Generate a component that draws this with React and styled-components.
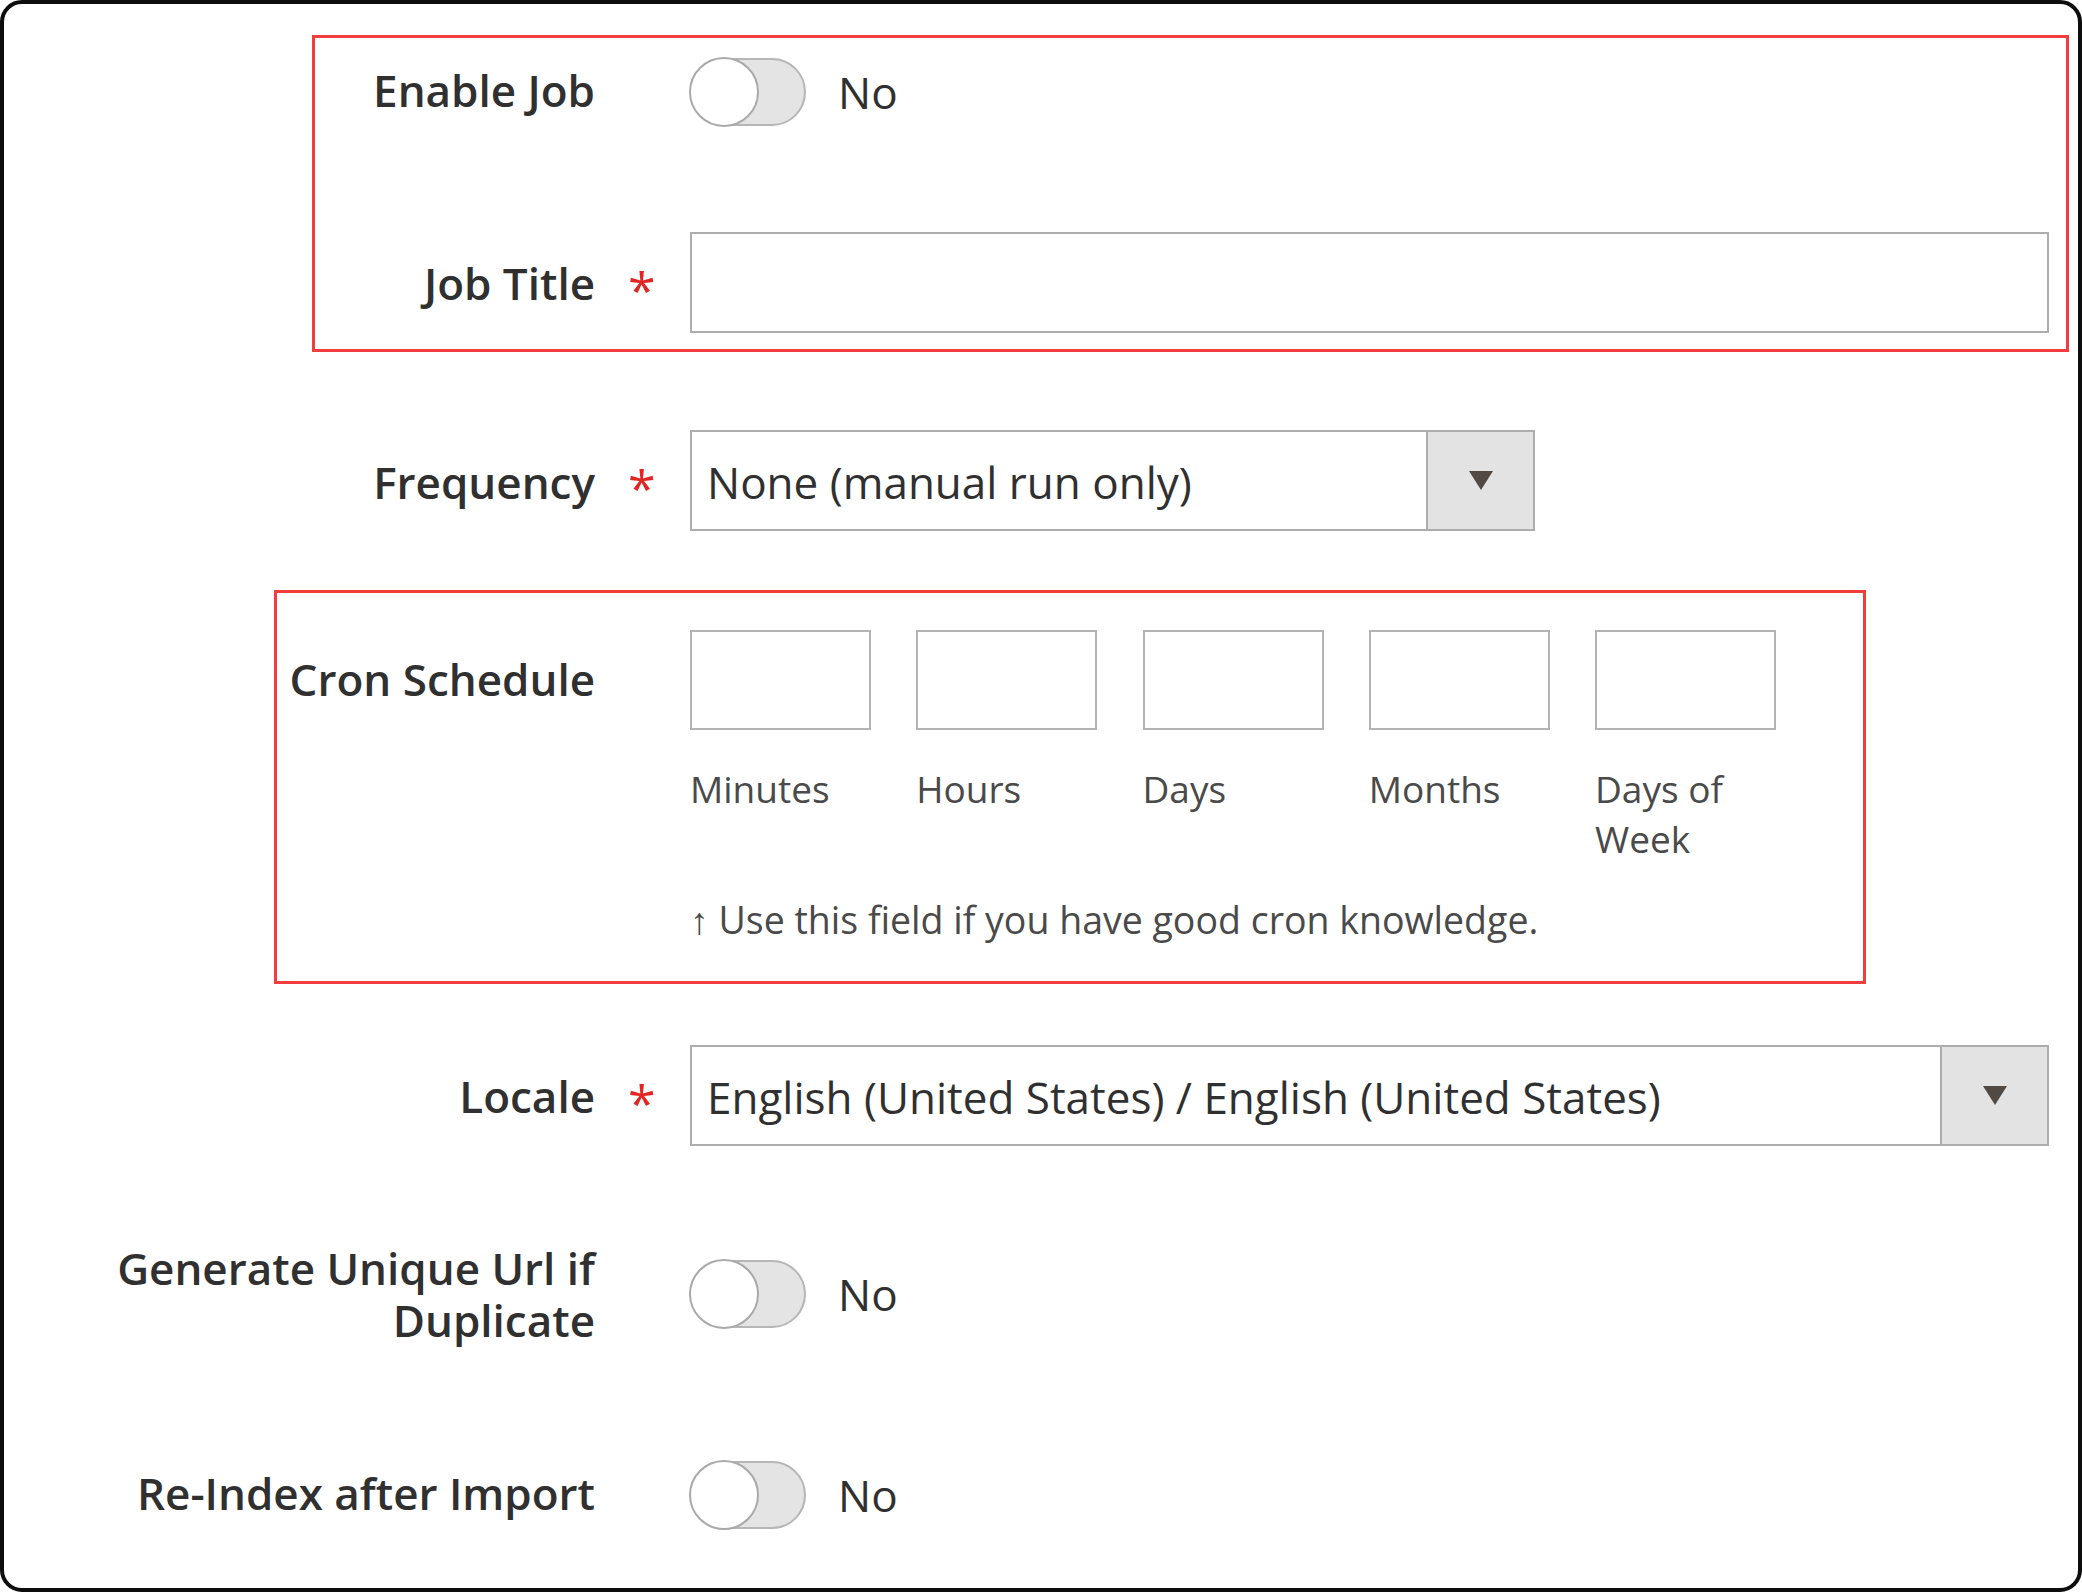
import React from 'react';
import styled, { createGlobalStyle } from 'styled-components';

const GlobalStyle = createGlobalStyle`
  html, body { margin: 0; padding: 0; background: #fff; overflow: hidden; }
  *, *::before, *::after { box-sizing: border-box; }
  body { font-family: "Open Sans", "Noto Sans", "Liberation Sans", sans-serif; color: #303030; }
`;

const Frame = styled.div`
  width: 2082px;
  height: 1592px;
  border: 4px solid #0d0d0d;
  border-radius: 22px;
  background: #fff;
  overflow: hidden;
`;

const Form = styled.div`
  display: flex;
  flex-direction: column;
  padding-top: 31px;
`;

const Highlight = styled.div`
  --shift: ${(p) => p.$left + 3}px;
  display: flex;
  flex-direction: column;
  margin-left: ${(p) => p.$left}px;
  margin-top: ${(p) => p.$mt || 0}px;
  width: ${(p) => p.$width}px;
  border: 3px solid #f13d3d;
  padding: ${(p) => p.$pt}px 0 ${(p) => p.$pb}px;
`;

const Row = styled.div`
  display: flex;
  align-items: ${(p) => p.$align || 'center'};
  margin-top: ${(p) => p.$mt || 0}px;
`;

const Label = styled.label`
  flex: 0 0 auto;
  width: calc(591px - var(--shift, 0px));
  padding-top: ${(p) => p.$pt || 0}px;
  padding-bottom: ${(p) => p.$pb || 0}px;
  text-align: right;
  font-size: 44px;
  font-weight: 600;
  line-height: 52px;
  color: #303030;
`;

const Required = styled.span`
  flex: 0 0 95px;
  align-self: center;
  height: 66px;
  padding: 14px 0 0 33px;
  font-size: 50px;
  line-height: 52px;
  color: #e22626;
`;

const SwitchWrap = styled.div`
  display: flex;
  align-items: center;
`;

const Track = styled.span`
  display: inline-flex;
  align-items: center;
  width: 116px;
  height: 68px;
  border-radius: 34px;
  background: #e4e4e4;
  border: 2px solid #b6b6b6;
`;

const Knob = styled.span`
  flex: 0 0 auto;
  width: 70px;
  height: 70px;
  margin-left: -3px;
  border-radius: 50%;
  background: #fff;
  border: 2px solid #a9a9a9;
`;

const SwitchText = styled.span`
  margin-left: 32px;
  font-size: 44px;
  line-height: 52px;
  color: #303030;
`;

const TextInput = styled.input`
  width: ${(p) => p.$w}px;
  height: 101px;
  border: 2px solid #adadad;
  border-radius: 0;
  background: #fff;
  outline: none;
  padding: 0 15px;
  font: inherit;
`;

const Select = styled.div`
  display: flex;
  width: ${(p) => p.$w}px;
  height: 101px;
  border: 2px solid #adadad;
  background: #fff;
`;

const SelectValue = styled.span`
  flex: 1 1 auto;
  display: flex;
  align-items: center;
  padding: 3px 0 0 15px;
  font-size: 44px;
  line-height: 52px;
  color: #303030;
  white-space: nowrap;
`;

const SelectArrow = styled.span`
  flex: 0 0 107px;
  display: flex;
  align-items: center;
  justify-content: center;
  border-left: 2px solid #adadad;
  background: #e3e3e3;
`;

const Triangle = styled.span`
  width: 0;
  height: 0;
  border-left: 12.5px solid transparent;
  border-right: 12.5px solid transparent;
  border-top: 19px solid #514943;
`;

const CronControl = styled.div`
  display: flex;
  flex-direction: column;
`;

const CronGrid = styled.div`
  display: grid;
  grid-template-columns: repeat(5, 181px);
  column-gap: 45.25px;
`;

const CronCell = styled.div`
  display: flex;
  flex-direction: column;
`;

const CronInput = styled.input`
  width: 100%;
  height: 100px;
  border: 2px solid #b3b3b3;
  border-radius: 0;
  background: #fff;
  outline: none;
  font: inherit;
`;

const CronCaption = styled.span`
  margin-top: 34px;
  font-size: 37px;
  line-height: 50px;
  color: #4a4a4a;
`;

const Hint = styled.p`
  margin: 31px 0 0;
  font-size: 37.5px;
  line-height: 50px;
  color: #4a4a4a;
  white-space: nowrap;
`;

const Toggle = ({ text = 'No' }) => (
  <SwitchWrap>
    <Track>
      <Knob />
    </Track>
    <SwitchText>{text}</SwitchText>
  </SwitchWrap>
);

const Dropdown = ({ value, width }) => (
  <Select $w={width}>
    <SelectValue>{value}</SelectValue>
    <SelectArrow>
      <Triangle />
    </SelectArrow>
  </Select>
);

const cronParts = ['Minutes', 'Hours', 'Days', 'Months', 'Days of Week'];

export default function App() {
  return (
    <>
      <GlobalStyle />
      <Frame>
        <Form>
          <Highlight $left={308} $width={1757} $pt={20} $pb={16}>
            <Row>
              <Label $pb={5}>Enable Job</Label>
              <Required />
              <Toggle />
            </Row>
            <Row $mt={106}>
              <Label>Job Title</Label>
              <Required>*</Required>
              <TextInput $w={1359} />
            </Row>
          </Highlight>

          <Row $mt={78}>
            <Label $pt={3}>Frequency</Label>
            <Required>*</Required>
            <Dropdown value="None (manual run only)" width={845} />
          </Row>

          <Highlight $left={270} $width={1592} $mt={59} $pt={37} $pb={36}>
            <Row $align="flex-start">
              <Label $pt={23}>Cron Schedule</Label>
              <Required />
              <CronControl>
                <CronGrid>
                  {cronParts.map((part) => (
                    <CronCell key={part}>
                      <CronInput />
                      <CronCaption>{part}</CronCaption>
                    </CronCell>
                  ))}
                </CronGrid>
                <Hint>↑ Use this field if you have good cron knowledge.</Hint>
              </CronControl>
            </Row>
          </Highlight>

          <Row $mt={61}>
            <Label>Locale</Label>
            <Required>*</Required>
            <Dropdown value="English (United States) / English (United States)" width={1359} />
          </Row>

          <Row $mt={96}>
            <Label>Generate Unique Url if Duplicate</Label>
            <Required />
            <Toggle />
          </Row>

          <Row $mt={115}>
            <Label $pb={5}>Re-Index after Import</Label>
            <Required />
            <Toggle />
          </Row>
        </Form>
      </Frame>
    </>
  );
}
